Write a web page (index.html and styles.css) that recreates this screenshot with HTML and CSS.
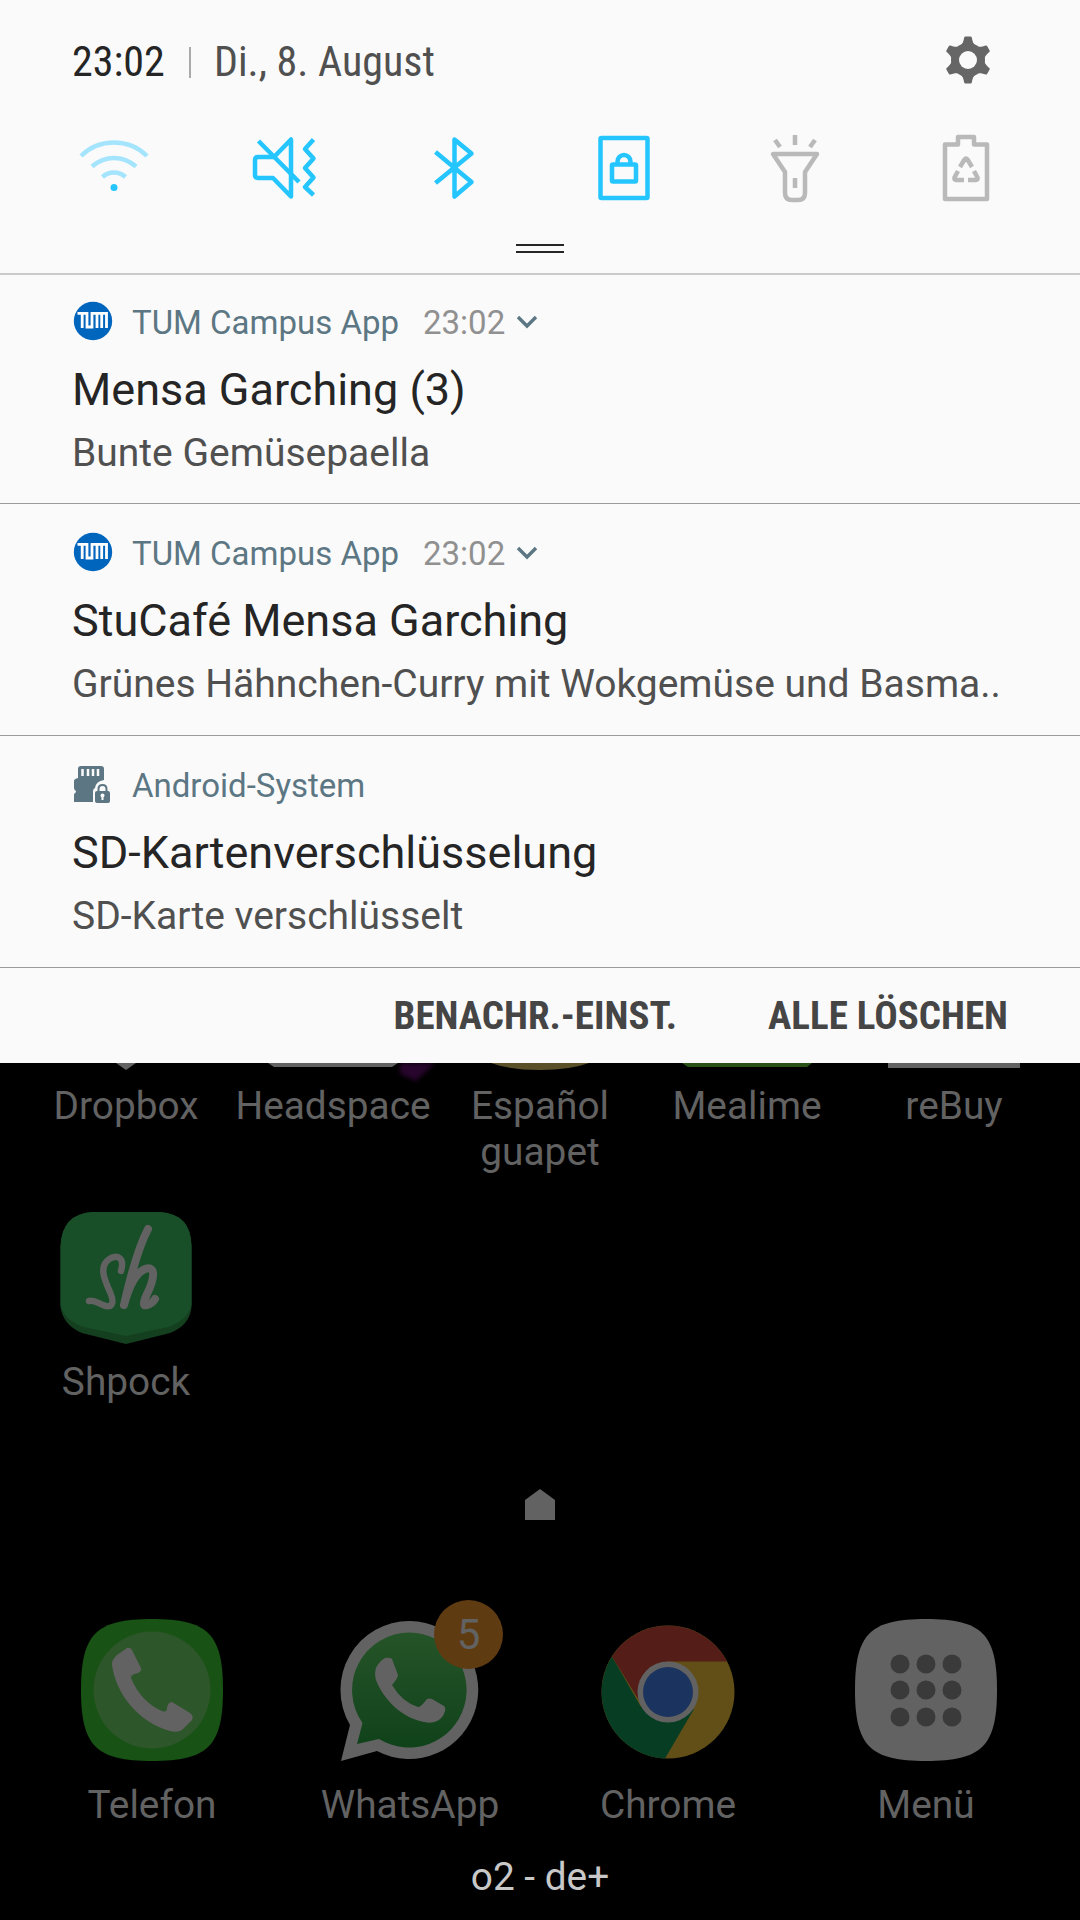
FILE: index.html
```html
<!DOCTYPE html>
<html lang="de">
<head>
<meta charset="utf-8">
<title>Benachrichtigungen</title>
<link rel="stylesheet" href="styles.css">
</head>
<body>
<main class="phone">
  <section class="shade">
    <header class="status">
      <span class="clock">23:02</span>
      <span class="bar"></span>
      <span class="date">Di., 8. August</span>
      <svg class="gear" viewBox="-24 -24 48 48">
        <g fill="#666">
          <circle r="17"/>
          <g id="cog"><path d="M-9-13C-5-16-4.500-19-3.800-22.500Q-3.500-23.500-2.500-23.500H2.500Q3.500-23.500 3.800-22.500C4.500-19 5-16 9-13Z"/></g>
          <use href="#cog" transform="rotate(60)"/><use href="#cog" transform="rotate(120)"/><use href="#cog" transform="rotate(180)"/><use href="#cog" transform="rotate(240)"/><use href="#cog" transform="rotate(300)"/>
        </g>
        <circle r="9" fill="#fafafa"/>
      </svg>
    </header>
    <nav class="toggles">
      <svg class="toggle on" viewBox="-36 -36 72 72"><g opacity=".4"><path d="M-33-12C-15-30 15-30 33-12"/><path d="M-22-1.500C-9-13 9-13 22-1.500"/><path d="M-11.500 9C-5 3 5 3 11.500 9"/></g><circle class="solid" cy="19.500" r="3.500"/></svg>
      <svg class="toggle on" viewBox="-36 -36 72 72"><path d="M-10-11L7-28.500V28.500L-11 10H-26Q-29 10-29 7V-8Q-29-11-26-11Z"/><path d="M-25.500-27L15 14M29.500-28.500L21-19L29.500-9.500L21 0L29.500 9.500L21 19L29.500 27"/></svg>
      <svg class="toggle on" viewBox="-34.500 -36 72 72"><path d="M-18-16L18 14L1 28.500V-28.500L18-14.500L-18 15"/></svg>
      <svg class="toggle on" viewBox="-35 -36 72 72"><rect x="-23.500" y="-30" width="47" height="60" rx="1"/><rect x="-12" y="-3.500" width="24" height="17" rx="1"/><path d="M-6.500-4V-6.500A6.500 6.500 0 0 1 6.500-6.500V-4"/></svg>
      <svg class="toggle" viewBox="-36 -36 72 72"><path d="M-22-14H22L10 4V25Q10 32 3 32H-3Q-10 32-10 25V4ZM0-33V-23M-20-28L-15-21M20-28L15-21M0 10V20"/></svg>
      <svg class="toggle" viewBox="-36 -36 72 72"><path d="M-21-23.500H-8V-31H8V-23.500H21V31H-21Z"/><path d="M-6-1L-1.500-8.500Q0-10.500 1.500-8.500L6-1M8 3L11.500 9.500Q12 12 10 12H2M-2 12H-10Q-12 12-11.500 9.500L-8 3"/></svg>
    </nav>
    <div class="handle"></div>

    <article class="note first">
      <div class="source">
        <svg class="source-icon" viewBox="0 0 40 40"><circle cx="20" cy="20" r="19.200" fill="#0065bd"/><path d="M4.500 12.300H14V26H19V12.300H33.500V27M24 13V27M28.700 13V27M9.200 12.300V27" fill="none" stroke="#fff" stroke-width="2.800"/></svg>
        <span class="app">TUM Campus App</span><time>23:02</time>
        <svg class="chevron" viewBox="0 0 22 14"><path d="M2 2L11 11L20 2"/></svg>
      </div>
      <h2>Mensa Garching (3)</h2>
      <p>Bunte Gemüsepaella</p>
    </article>
    <article class="note">
      <div class="source">
        <svg class="source-icon" viewBox="0 0 40 40"><circle cx="20" cy="20" r="19.200" fill="#0065bd"/><path d="M4.500 12.300H14V26H19V12.300H33.500V27M24 13V27M28.700 13V27M9.200 12.300V27" fill="none" stroke="#fff" stroke-width="2.800"/></svg>
        <span class="app">TUM Campus App</span><time>23:02</time>
        <svg class="chevron" viewBox="0 0 22 14"><path d="M2 2L11 11L20 2"/></svg>
      </div>
      <h2>StuCafé Mensa Garching</h2>
      <p>Grünes Hähnchen-Curry mit Wokgemüse und Basma..</p>
    </article>
    <article class="note">
      <div class="source">
        <svg class="source-icon" viewBox="0 0 40 40"><path fill="#5c7783" d="M5 5Q5 2 8 2H28Q31 2 31 5V16Q23 17 22 24Q20 25 20 27V38H1V30Q3 29 3 27Q1 26 1 24V17Q1 15 5 14Z"/><path d="M9.500 5V12M15 5V12M20 5V12M25 5V12" stroke="#fafafa" stroke-width="2.500"/><rect x="22" y="27" width="15" height="12" rx="2" fill="#5c7783"/><path d="M25.500 28V25Q25.500 21 29.500 21Q33.500 21 33.500 25V28" fill="none" stroke="#5c7783" stroke-width="2"/><path d="M29.500 31V36" stroke="#fafafa" stroke-width="2"/><circle cx="29.500" cy="31.500" r="2" fill="#fafafa"/></svg>
        <span class="app system">Android-System</span>
      </div>
      <h2>SD-Kartenverschlüsselung</h2>
      <p>SD-Karte verschlüsselt</p>
    </article>
    <footer class="actions"><span>BENACHR.-EINST.</span><span>ALLE LÖSCHEN</span></footer>
  </section>

  <section class="home">
    <svg class="peek" viewBox="0 1063 1080 32">
      <path d="M116 1063H136L126 1070Z" fill="#626262"/>
      <path d="M268 1063H398L392 1067H274Z" fill="#626262"/>
      <path class="glow" d="M400 1063H435L416 1081L400 1074Z" fill="#27052c"/>
      <path d="M491 1063H589Q570 1070 540 1070Q510 1070 491 1063Z" fill="#5a5028"/>
      <path d="M682 1063H812L807 1067H688Z" fill="#2a5216"/>
      <path d="M888 1063H1020V1068H888Z" fill="#626262"/>
    </svg>
    <div class="apps">
      <span>Dropbox</span><span>Headspace</span><span>Español guapet</span><span>Mealime</span><span>reBuy</span>
    </div>
    <div class="shpock">
      <svg viewBox="0 0 132 132"><path fill="#144020" d="M32 0H100Q131 2 131.500 34V95Q130 113 110 121L66 132L22 121Q3 113 .5 95V34Q2 2 32 0Z"/><path fill="#184f28" d="M32 0H100Q131 2 131.500 34V93Q127 109 108 115L66 124L24 115Q5 109 .5 93V34Q2 2 32 0Z"/><g fill="none" stroke="#626262" stroke-linecap="round" stroke-linejoin="round"><path stroke-width="6.500" d="M61 59C65 45 57 43 51 46C38 53 44 67 50 80C56 94 50 96 43 93C38 91 34 88 29 89"/><path stroke-width="8" d="M88 17C78 36 71 62 64 93C68 78 75 61 85 57C97 53 94 68 87 82C82 93 84 94 87 93Q92 92 95 87"/></g></svg>
      <span>Shpock</span>
    </div>
    <svg class="page-home" viewBox="0 0 30 31"><path fill="#626262" d="M0 11L15 0L30 11V31H0Z"/></svg>
    <div class="dock">
      <div class="dock-item">
        <svg viewBox="-72 -72 144 144"><path fill="#185214" d="M0-71C56-71 71-56 71 0S56 71 0 71S-71 56-71 0S-56-71 0-71Z"/><circle r="58.500" fill="#2e562b"/><path fill="#626262" d="M-25-42Q-22-43-20-40L-11-22Q-10-19-14-17Q-22-15-21-12Q-11 12 10 21Q15 23 15 18Q16 12 20 12L38 23Q42 26 40 30L31 39Q27 43 18 41C-12 33-36 5-40-25Q-41-29-35-35Z"/></svg>
        <span>Telefon</span>
      </div>
      <div class="dock-item">
        <svg viewBox="-72 -72 144 144"><defs><linearGradient id="wa" x2="0" y2="1"><stop stop-color="#265429"/><stop offset="1" stop-color="#10421a"/></linearGradient></defs><path fill="#626262" d="M0-69A69 69 0 1 1-33 61L-69 71L-60 35A69 69 0 0 1 0-69Z"/><path fill="url(#wa)" d="M0-57.500A57.500 57.500 0 1 1-31 49L-53 54L-47.500 33A57.500 57.500 0 0 1 0-57.500Z"/><path fill="#626262" d="M-25-32Q-20-33-18-31L-12-15Q-12-12-18-5Q-8 12 8 17Q10 18 17 9Q19 8 22 9L34 16Q37 18 33 26Q26 35 14 32C-8 28-27 9-34-10Q-38-24-25-32Z"/></svg>
        <b class="badge">5</b>
        <span>WhatsApp</span>
      </div>
      <div class="dock-item">
        <svg viewBox="-72 -72 144 144"><g transform="translate(0 2)"><circle r="66.500" fill="#624f18"/><path fill="#073d22" d="M-56-35.500A66.500 66.500 0 0 0-3 66.500L26 17L0 0L-27 15Z"/><path fill="#541d18" d="M-56-35.500A66.500 66.500 0 0 1 59-30.500H0L-28 10Z"/><circle r="30.500" fill="#626262"/><circle r="25" fill="#1b335f"/></g></svg>
        <span>Chrome</span>
      </div>
      <div class="dock-item">
        <svg viewBox="-72 -72 144 144"><path fill="#626262" d="M0-71C56-71 71-56 71 0S56 71 0 71S-71 56-71 0S-56-71 0-71Z"/><g fill="#3a3a3a"><circle cx="-26" cy="-26" r="9.500"/><circle cy="-26" r="9.500"/><circle cx="26" cy="-26" r="9.500"/><circle cx="-26" r="9.500"/><circle r="9.500"/><circle cx="26" r="9.500"/><circle cx="-26" cy="27" r="9.500"/><circle cy="27" r="9.500"/><circle cx="26" cy="27" r="9.500"/></g></svg>
        <span>Menü</span>
      </div>
    </div>
    <div class="carrier">o2 - de+</div>
  </section>
</main>
</body>
</html>
```
FILE: styles.css
```css
* { box-sizing: border-box; }
body { margin: 0; background: #000; font-family: Roboto, "Liberation Sans", sans-serif; }
svg { display: block; flex: none; }
.phone { width: 1080px; height: 1920px; overflow: hidden; background: #000; display: flex; flex-direction: column; }
.shade { height: 1063px; flex: none; background: #fafafa; color: #252525; }

.status { height: 122px; padding: 2px 88px 0 72px; display: flex; align-items: center; font-family: "Roboto Condensed", Roboto, sans-serif; font-stretch: 75%; font-size: 42px; line-height: 50px; white-space: nowrap; }
.clock { width: 117px; }
.bar { width: 2px; height: 31px; background: #aaa; margin-right: 23px; }
.date { color: #505050; }
.gear { width: 48px; height: 48px; margin: -4px 0 0 auto; }

.toggles { height: 92px; padding: 0 29px; display: grid; grid-template-columns: repeat(6, 1fr); justify-items: center; align-items: center; }
.toggle { width: 72px; height: 72px; fill: none; stroke: #b9b9b9; stroke-width: 4.500px; stroke-linejoin: round; }
.toggle.on { stroke: #25c5ff; }
.toggle .solid { fill: #25c5ff; stroke: none; }
.handle { width: 48px; height: 9px; margin: 30px auto 20px; border: solid #252525; border-width: 2px 0; }

.note { height: 232px; padding: 28px 72px 0; border-top: 1px solid #9c9c9c; }
.note.first { height: 230px; border-top: 2px solid #c8cacc; padding-top: 26px; }
.source { display: flex; align-items: center; height: 42px; padding-top: 2px; font-size: 33px; line-height: 40px; white-space: nowrap; }
.source-icon { width: 40px; height: 40px; margin: -4px 19px 0 1px; }
.app { width: 291px; color: #5c7783; }
.source time { color: #909090; }
.chevron { width: 22px; height: 14px; margin: -2px 0 0 11px; fill: none; stroke: #5c7783; stroke-width: 3.400px; }
.note h2 { margin: 20px 0 0; font-size: 45px; line-height: 54px; font-weight: 400; white-space: nowrap; }
.note p { margin: 13px 0 0; font-size: 39px; line-height: 46px; color: #505050; white-space: nowrap; }

.actions { height: 96px; border-top: 1px solid #9c9c9c; padding: 0 72px; display: flex; justify-content: flex-end; align-items: center; gap: 91px; font-family: "Roboto Condensed", Roboto, sans-serif; font-stretch: 75%; font-weight: 700; font-size: 39px; color: #454545; }

.home { flex: 1; color: #626262; font-size: 38.800px; line-height: 46px; text-align: center; display: flex; flex-direction: column; }
.peek { width: 1080px; height: 32px; margin-bottom: -12px; }
.glow { filter: blur(2px); }
.apps { height: 129px; padding: 0 22.500px; display: grid; grid-template-columns: repeat(5, 1fr); }
.apps span { padding: 0 24px; }
.apps span:nth-child(2) { padding: 0; }
.shpock { width: 132px; margin-left: 60px; height: 277px; }
.shpock svg { width: 132px; height: 132px; margin-bottom: 15px; }
.page-home { width: 30px; height: 31px; align-self: center; }
.dock { padding: 0 25px 0 23px; margin-top: 98px; display: grid; grid-template-columns: repeat(4, 1fr); }
.dock-item { position: relative; display: flex; flex-direction: column; align-items: center; }
.dock-item svg { width: 144px; height: 144px; margin-bottom: 20px; }
.badge { position: absolute; top: -18px; left: 153px; width: 69px; height: 69px; border-radius: 50%; background: #5f3b12; font-size: 42px; font-weight: 400; line-height: 69px; }
.carrier { margin-top: 26px; color: #c8c8c8; }
```
